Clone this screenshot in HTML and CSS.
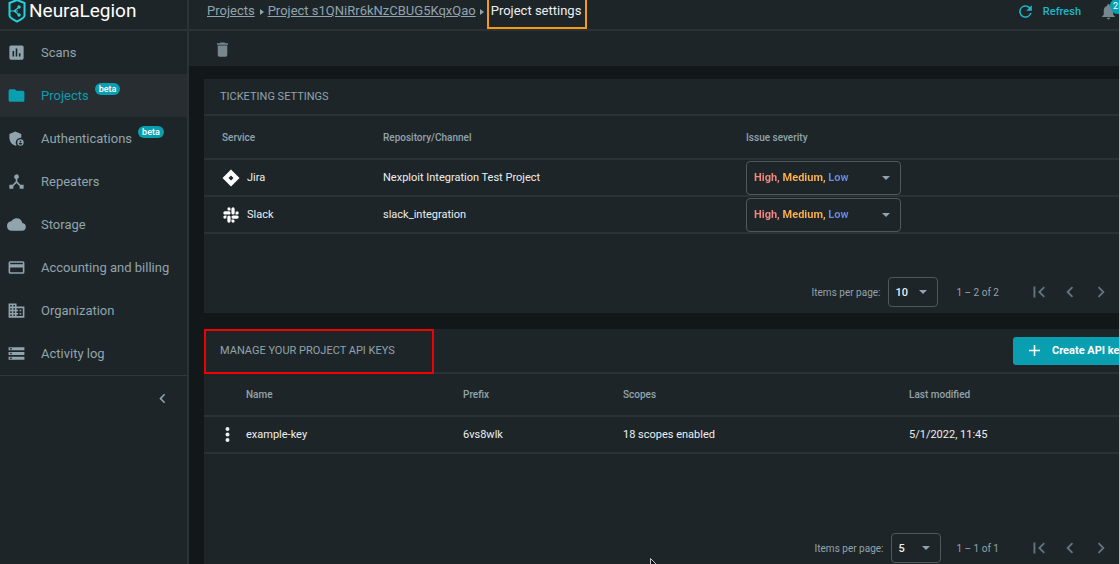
FILE: index.html
```html
<!DOCTYPE html>
<html lang="en">

<head>
    <meta charset="UTF-8">
    <meta name="viewport" content="width=device-width, initial-scale=1.0">
    <title>Project settings</title>
    <link rel="stylesheet" href="styles.css">
</head>

<body>
    <div class="app">
        <aside class="sidebar">
            <a class="logo" href="#">
                <svg width="18" height="24" viewBox="0 0 18 24" fill="none" stroke="#1fd3e0" stroke-width="2">
                    <path d="M9 1L1.500 4v12.500c0 2.500 4.500 4.500 7.500 6 3-1.500 7.500-3.500 7.500-6V4z" />
                    <path d="M2 12h4l4-3M6 12l4 3M6 12h4" stroke-width="1.200" />
                    <circle cx="11" cy="8" r="1" stroke-width="1.500" />
                    <circle cx="11" cy="16" r="1" stroke-width="1.500" />
                </svg>
                <span>NeuraLegion</span>
            </a>
            <nav class="nav">
                <a class="nav-item" href="#">
                    <svg class="icon" viewBox="0 0 24 24"><path d="M19 3H5a2 2 0 0 0-2 2v14a2 2 0 0 0 2 2h14a2 2 0 0 0 2-2V5a2 2 0 0 0-2-2zM9 17H7v-7h2zm4 0h-2V7h2zm4 0h-2v-4h2z" /></svg>
                    <span>Scans</span>
                </a>
                <a class="nav-item active" href="#">
                    <svg class="icon" viewBox="0 0 24 24"><path d="M10 4H4a2 2 0 0 0-2 2v12a2 2 0 0 0 2 2h16a2 2 0 0 0 2-2V8a2 2 0 0 0-2-2h-8z" /></svg>
                    <span>Projects</span>
                    <span class="beta">beta</span>
                </a>
                <a class="nav-item" href="#">
                    <svg class="icon" viewBox="0 0 24 24"><path d="M17 11c.340 0 .670.040 1 .090V6.270L10.500 3 3 6.270v4.910c0 4.540 3.200 8.790 7.500 9.820.550-.130 1.080-.320 1.600-.550A6 6 0 0 1 17 11zm0 2a4 4 0 1 0 0 8 4 4 0 0 0 0-8zm0 1.380a1.120 1.120 0 1 1 0 2.240 1.120 1.120 0 0 1 0-2.240zm0 5.370a2.700 2.700 0 0 1-2.240-1.190c.050-.730 1.510-1.130 2.240-1.130s2.190.400 2.240 1.130A2.700 2.700 0 0 1 17 19.750z" /></svg>
                    <span>Authentications</span>
                    <span class="beta">beta</span>
                </a>
                <a class="nav-item" href="#">
                    <svg class="icon" viewBox="0 0 24 24"><path d="M17 16l-4-4V8.820A3 3 0 1 0 9 6c0 1.300.840 2.400 2 2.820V12l-4 4H3v5h5v-3.050l4-4.200 4 4.200V21h5v-5z" /></svg>
                    <span>Repeaters</span>
                </a>
                <a class="nav-item" href="#">
                    <svg class="icon" viewBox="0 0 24 24"><path d="M19.350 10.040A7.490 7.490 0 0 0 12 4C9.110 4 6.600 5.640 5.350 8.040A6 6 0 0 0 6 20h13a5 5 0 0 0 .350-9.960z" /></svg>
                    <span>Storage</span>
                </a>
                <a class="nav-item" href="#">
                    <svg class="icon" viewBox="0 0 24 24"><path d="M20 4H4a2 2 0 0 0-2 2v12a2 2 0 0 0 2 2h16a2 2 0 0 0 2-2V6a2 2 0 0 0-2-2zm0 14H4v-6h16zm0-10H4V6h16z" /></svg>
                    <span>Accounting and billing</span>
                </a>
                <a class="nav-item" href="#">
                    <svg class="icon" viewBox="0 0 24 24"><path d="M12 7V3H2v18h20V7zM6 19H4v-2h2zm0-4H4v-2h2zm0-4H4V9h2zm0-4H4V5h2zm4 12H8v-2h2zm0-4H8v-2h2zm0-4H8V9h2zm0-4H8V5h2zm10 12h-8v-2h2v-2h-2v-2h2v-2h-2V9h8zm-2-8h-2v2h2zm0 4h-2v2h2z" /></svg>
                    <span>Organization</span>
                </a>
                <a class="nav-item" href="#">
                    <svg class="icon" viewBox="0 0 24 24"><path d="M2 20h20v-4H2zm2-3h2v2H4zM2 4v4h20V4zm4 3H4V5h2zm-4 7h20v-4H2zm2-3h2v2H4z" /></svg>
                    <span>Activity log</span>
                </a>
            </nav>
            <button class="collapse" aria-label="Collapse menu">
                <svg class="icon" viewBox="0 0 24 24"><path d="M15.410 7.410L14 6l-6 6 6 6 1.410-1.410L10.830 12z" /></svg>
            </button>
        </aside>

        <main class="main">
            <header class="topbar">
                <nav class="breadcrumbs">
                    <a href="#">Projects</a>
                    <span class="sep"></span>
                    <a href="#">Project s1QNiRr6kNzCBUG5KqxQao</a>
                    <span class="sep"></span>
                    <span class="current">Project settings</span>
                </nav>
                <button class="refresh">
                    <svg class="icon" viewBox="0 0 24 24"><path d="M17.650 6.350A8 8 0 1 0 19.730 14h-2.080A6 6 0 1 1 12 6c1.660 0 3.140.690 4.220 1.780L13 11h7V4z" /></svg>
                    Refresh
                </button>
                <button class="bell" aria-label="Notifications">
                    <svg class="icon" viewBox="0 0 24 24"><path d="M12 22a2 2 0 0 0 2-2h-4a2 2 0 0 0 2 2zm6-6v-5c0-3.070-1.640-5.640-4.500-6.320V4a1.500 1.500 0 0 0-3 0v.680C7.630 5.360 6 7.920 6 11v5l-2 2v1h16v-1z" /></svg>
                    <span class="bell-count">25</span>
                </button>
            </header>

            <div class="toolbar">
                <button class="delete" aria-label="Delete project">
                    <svg class="icon" viewBox="0 0 24 24"><path d="M6 19a2 2 0 0 0 2 2h8a2 2 0 0 0 2-2V7H6zM19 4h-3.500l-1-1h-5l-1 1H5v2h14z" /></svg>
                </button>
            </div>

            <div class="content">
                <section class="card">
                    <div class="card-header">
                        <h2>TICKETING SETTINGS</h2>
                    </div>
                    <table class="ticketing">
                        <thead>
                            <tr>
                                <th class="col-service">Service</th>
                                <th class="col-repo">Repository/Channel</th>
                                <th>Issue severity</th>
                            </tr>
                        </thead>
                        <tbody>
                            <tr>
                                <td>
                                    <span class="service">
                                        <svg width="18" height="18" viewBox="0 0 18 18" fill="#fff"><path fill-rule="evenodd" d="M9 .500L17.500 9 9 17.500.500 9zM9 6.500L6.500 9 9 11.500 11.500 9z" /></svg>
                                        Jira
                                    </span>
                                </td>
                                <td>Nexploit Integration Test Project</td>
                                <td>
                                    <span class="select severity">
                                        <select aria-label="Jira issue severity">
                                            <option>High, Medium, Low</option>
                                        </select>
                                    </span>
                                </td>
                            </tr>
                            <tr>
                                <td>
                                    <span class="service">
                                        <svg width="18" height="18" viewBox="-2 -2 28 28" fill="#fff">
                                            <g id="slack-arm">
                                                <path d="M5.040 15.160a2.520 2.520 0 1 1-2.520-2.520h2.520z" />
                                                <path d="M6.310 15.160a2.520 2.520 0 0 1 5.040 0v6.320a2.520 2.520 0 0 1-5.040 0z" />
                                            </g>
                                            <use href="#slack-arm" transform="rotate(90 12 12)" />
                                            <use href="#slack-arm" transform="rotate(180 12 12)" />
                                            <use href="#slack-arm" transform="rotate(270 12 12)" />
                                        </svg>
                                        Slack
                                    </span>
                                </td>
                                <td>slack_integration</td>
                                <td>
                                    <span class="select severity">
                                        <select aria-label="Slack issue severity">
                                            <option>High, Medium, Low</option>
                                        </select>
                                    </span>
                                </td>
                            </tr>
                        </tbody>
                    </table>
                    <div class="paginator">
                        <label for="ticketing-size">Items per page:</label>
                        <span class="select">
                            <select id="ticketing-size">
                                <option>10</option>
                            </select>
                        </span>
                        <span class="range">1 – 2 of 2</span>
                        <button aria-label="First page"><svg class="icon" viewBox="0 0 24 24"><path d="M18.410 16.590L13.820 12l4.590-4.590L17 6l-6 6 6 6zM6 6h2v12H6z" /></svg></button>
                        <button aria-label="Previous page"><svg class="icon" viewBox="0 0 24 24"><path d="M15.410 7.410L14 6l-6 6 6 6 1.410-1.410L10.830 12z" /></svg></button>
                        <button aria-label="Next page"><svg class="icon" viewBox="0 0 24 24"><path d="M10 6L8.590 7.410 13.170 12l-4.580 4.590L10 18l6-6z" /></svg></button>
                    </div>
                </section>

                <section class="card">
                    <div class="card-header keys-header">
                        <h2 class="highlight">MANAGE YOUR PROJECT API KEYS</h2>
                        <button class="create">
                            <svg class="icon" viewBox="0 0 24 24"><path d="M19 13h-6v6h-2v-6H5v-2h6V5h2v6h6z" /></svg>
                            Create API key
                        </button>
                    </div>
                    <table class="keys">
                        <thead>
                            <tr>
                                <th class="col-menu"></th>
                                <th class="col-name">Name</th>
                                <th class="col-prefix">Prefix</th>
                                <th class="col-scopes">Scopes</th>
                                <th>Last modified</th>
                            </tr>
                        </thead>
                        <tbody>
                            <tr>
                                <td>
                                    <button class="row-menu" aria-label="Key actions">
                                        <svg class="icon" viewBox="0 0 24 24"><circle cx="12" cy="5" r="2.500" /><circle cx="12" cy="12" r="2.500" /><circle cx="12" cy="19" r="2.500" /></svg>
                                    </button>
                                </td>
                                <td>example-key</td>
                                <td>6vs8wlk</td>
                                <td>18 scopes enabled</td>
                                <td>5/1/2022, 11:45</td>
                            </tr>
                        </tbody>
                    </table>
                    <div class="paginator">
                        <label for="keys-size">Items per page:</label>
                        <span class="select">
                            <select id="keys-size">
                                <option>5</option>
                            </select>
                        </span>
                        <span class="range">1 – 1 of 1</span>
                        <button aria-label="First page"><svg class="icon" viewBox="0 0 24 24"><path d="M18.410 16.590L13.820 12l4.590-4.590L17 6l-6 6 6 6zM6 6h2v12H6z" /></svg></button>
                        <button aria-label="Previous page"><svg class="icon" viewBox="0 0 24 24"><path d="M15.410 7.410L14 6l-6 6 6 6 1.410-1.410L10.830 12z" /></svg></button>
                        <button aria-label="Next page"><svg class="icon" viewBox="0 0 24 24"><path d="M10 6L8.590 7.410 13.170 12l-4.580 4.590L10 18l6-6z" /></svg></button>
                    </div>
                </section>
            </div>
        </main>
    </div>
    <svg class="cursor" width="12" height="18" viewBox="0 0 12 18" fill="#101416" stroke="#c4c8ca"><path d="M.500.500v14l3.500-3 2 5 2-1-2-4.500h5z" /></svg>
</body>

</html>
```
FILE: styles.css
```css
*,
*::before,
*::after {
    box-sizing: border-box;
}

body {
    margin: 0;
    height: 100vh;
    overflow: hidden;
    position: relative;
    background: #12171a;
    border-right: 1px solid #b9bcbd;
    color: #eceff1;
    font-family: Roboto, "Liberation Sans", sans-serif;
    font-size: 11px;
}

a {
    color: inherit;
}

button,
select {
    font: inherit;
    color: inherit;
    background: none;
    border: none;
    padding: 0;
    cursor: pointer;
}

.icon {
    width: 19px;
    height: 19px;
    fill: currentColor;
    flex: none;
    display: block;
}

/* the page is a little wider than the window */
.app {
    display: flex;
    width: calc(100% + 41px);
    min-height: 100vh;
}

/* sidebar */
.sidebar {
    width: 189px;
    flex: none;
    background: #1e2528;
    border-right: 2px solid #2b3134;
    color: #90a4ae;
}

.logo {
    display: flex;
    align-items: center;
    gap: 3px;
    height: 31px;
    padding: 0 0 8px 8px;
    border-bottom: 2px solid #2b3134;
    color: #fff;
    font-family: Roboto, sans-serif;
    font-size: 19px;
    line-height: 22px;
    text-decoration: none;
}

.nav {
    border-bottom: 1px solid #30373a;
}

.nav-item {
    display: flex;
    align-items: center;
    height: 43px;
    padding-left: 7px;
    font-size: 13px;
    line-height: 14px;
    text-decoration: none;
}

.nav-item .icon {
    margin-right: 15px;
}

.nav-item.active {
    background: #272d30;
    color: #0a9fb0;
}

.beta {
    height: 12px;
    margin: 0 0 14px 6px;
    padding: 0 4px;
    border-radius: 6px;
    background: #0a9fb0;
    color: #fff;
    font-size: 9px;
    font-weight: 500;
    line-height: 12px;
}

.collapse {
    display: block;
    margin: 13px 15px 0 auto;
}

/* top bar */
.main {
    flex: 1;
    min-width: 0;
}

.topbar {
    display: flex;
    height: 31px;
    padding: 0 42px 0 18px;
    background: #1e2528;
    border-bottom: 2px solid #2b3134;
}

.breadcrumbs {
    display: flex;
    flex: 1;
    font-size: 13px;
    line-height: 22px;
    color: #90a4ae;
}

.sep {
    margin: 9px 4px 0 5px;
    height: 6px;
    border: 3px solid transparent;
    border-left: 4px solid #90a4ae;
    border-right: none;
}

.breadcrumbs .sep:nth-of-type(2) {
    margin: 9px 3px 0 4px;
}

.current {
    padding: 0 4px 0 2px;
    border: 2px solid #f39c12;
    border-top: none;
    color: #eceff1;
}

.refresh {
    display: flex;
    align-items: center;
    gap: 8px;
    height: 23px;
    color: #1fb6c9;
    font-weight: 500;
}

.bell {
    position: relative;
    height: 23px;
    margin-left: 18px;
    color: #78868d;
}

.bell-count {
    position: absolute;
    top: -2px;
    left: 11px;
    width: 16px;
    height: 16px;
    border-radius: 8px;
    background: #0a9fb0;
    color: #fff;
    font-size: 9px;
    line-height: 16px;
}

.toolbar {
    height: 35px;
    padding: 9px 0 0 24px;
    background: #1e2528;
}

.delete {
    color: #78868d;
}

/* cards */
.content {
    display: flex;
    flex-direction: column;
    gap: 16px;
    padding: 13px 0 0 15px;
}

.card {
    background: #1e2528;
}

.card-header {
    display: flex;
    align-items: center;
    height: 37px;
    padding-left: 16px;
    border-bottom: 2px solid #2b3134;
}

h2 {
    margin: 0;
    color: #90a4ae;
    font-size: 11px;
    font-weight: 400;
}

.keys-header {
    justify-content: space-between;
    height: 45px;
    padding: 0 16px 0 0;
}

.highlight {
    align-self: stretch;
    width: 230px;
    margin-bottom: -2px;
    padding-left: 14px;
    border: 2px solid #f00000;
    line-height: 39px;
}

.create {
    display: flex;
    align-items: center;
    gap: 8px;
    width: 131px;
    height: 28px;
    padding-left: 12px;
    border-radius: 3px;
    background: #0a9fb0;
    color: #fff;
    font-weight: 700;
    white-space: nowrap;
}

table {
    width: 100%;
    table-layout: fixed;
    border-collapse: collapse;
}

th,
td {
    height: 37px;
    padding: 0;
    border-bottom: 2px solid #2b3134;
    text-align: left;
}

th {
    height: 43px;
    color: #90a4ae;
    font-size: 10px;
    font-weight: 500;
}

.keys th {
    height: 42px;
}

.ticketing th:first-child,
.ticketing td:first-child {
    padding-left: 18px;
}

.col-service {
    width: 179px;
}

.col-repo {
    width: 363px;
}

.col-menu {
    width: 42px;
}

.col-name {
    width: 217px;
}

.col-prefix {
    width: 160px;
}

.col-scopes {
    width: 286px;
}

.service {
    display: flex;
    align-items: center;
    gap: 7px;
}

.row-menu {
    display: block;
    margin-left: 14px;
}

/* dropdowns */
.select {
    display: block;
    position: relative;
    width: 50px;
    height: 30px;
    border: 1px solid #50585c;
    border-radius: 4px;
}

.select::after {
    content: "";
    position: absolute;
    top: 12px;
    right: 10px;
    border: 4px solid transparent;
    border-top-color: #90a4ae;
    border-bottom: none;
    pointer-events: none;
}

.select select {
    appearance: none;
    display: block;
    width: 100%;
    height: 100%;
    padding-left: 6px;
    font-size: 11px;
    font-weight: 500;
    outline: none;
}

.select.severity {
    width: 155px;
    height: 34px;
}

.select.severity::after {
    top: 14px;
}

/* each severity keeps its own colour inside the one line of text */
.severity select {
    padding-left: 7px;
    background: linear-gradient(to right, #f4877f 34px, #ffb14d 34px 79px, #6788e8 79px);
    background-clip: text;
    -webkit-background-clip: text;
    color: transparent;
    font-weight: 700;
}

/* paginator */
.paginator {
    display: flex;
    align-items: center;
    justify-content: flex-end;
    padding: 43px 44px 6px 0;
    color: #90a4ae;
    font-size: 10px;
}

.paginator .select {
    margin: 0 18px 0 8px;
    color: #eceff1;
}

.range {
    margin-right: 24px;
}

.paginator button {
    display: flex;
    justify-content: center;
    width: 31px;
    color: #66757c;
}

.paginator .icon {
    width: 22px;
    height: 22px;
}

.keys + .paginator {
    padding-top: 79px;
}

.keys + .paginator .select {
    margin-right: 15px;
}

.cursor {
    position: absolute;
    left: 650px;
    top: 558px;
}
```
